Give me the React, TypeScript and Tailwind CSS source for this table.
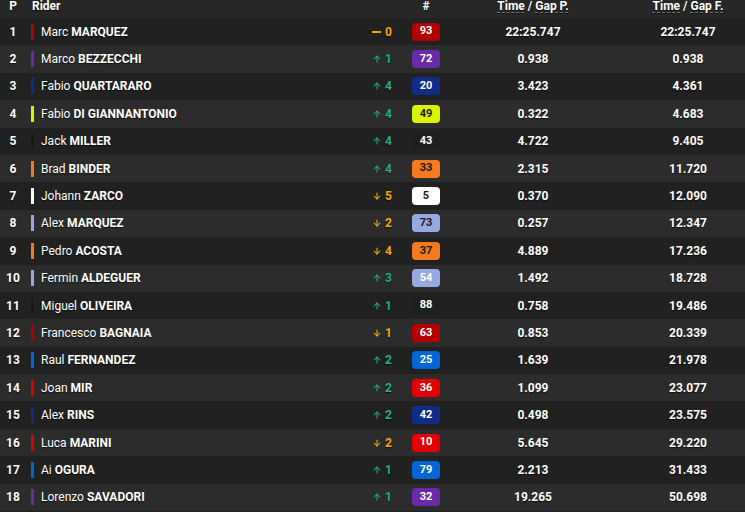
import { ArrowUp, ArrowDown } from 'lucide-react'

type Row = {
  pos: number
  first: string
  last: string
  team: string
  change: number
  num: number
  badge: string
  badgeText: string
  gapP: string
  gapF: string
}

const rows: Row[] = [
  { pos: 1, first: 'Marc', last: 'MARQUEZ', team: 'bg-[#b30000]', change: 0, num: 93, badge: 'bg-[#b30000]', badgeText: 'text-white', gapP: '22:25.747', gapF: '22:25.747' },
  { pos: 2, first: 'Marco', last: 'BEZZECCHI', team: 'bg-[#6a2aa8]', change: 1, num: 72, badge: 'bg-[#6a2aa8]', badgeText: 'text-white', gapP: '0.938', gapF: '0.938' },
  { pos: 3, first: 'Fabio', last: 'QUARTARARO', team: 'bg-[#0e2c88]', change: 4, num: 20, badge: 'bg-[#0e2c88]', badgeText: 'text-white', gapP: '3.423', gapF: '4.361' },
  { pos: 4, first: 'Fabio', last: 'DI GIANNANTONIO', team: 'bg-[#d8f400]', change: 4, num: 49, badge: 'bg-[#d8f400]', badgeText: 'text-[#1b1b1b]', gapP: '0.322', gapF: '4.683' },
  { pos: 5, first: 'Jack', last: 'MILLER', team: 'bg-[#1a1a1a]', change: 4, num: 43, badge: 'bg-[#1e1e1e]', badgeText: 'text-white', gapP: '4.722', gapF: '9.405' },
  { pos: 6, first: 'Brad', last: 'BINDER', team: 'bg-[#f47a20]', change: 4, num: 33, badge: 'bg-[#f47a20]', badgeText: 'text-[#1b1b1b]', gapP: '2.315', gapF: '11.720' },
  { pos: 7, first: 'Johann', last: 'ZARCO', team: 'bg-white', change: -5, num: 5, badge: 'bg-white', badgeText: 'text-[#1b1b1b]', gapP: '0.370', gapF: '12.090' },
  { pos: 8, first: 'Alex', last: 'MARQUEZ', team: 'bg-[#97a9e2]', change: -2, num: 73, badge: 'bg-[#97a9e2]', badgeText: 'text-[#1b1b1b]', gapP: '0.257', gapF: '12.347' },
  { pos: 9, first: 'Pedro', last: 'ACOSTA', team: 'bg-[#f47a20]', change: -4, num: 37, badge: 'bg-[#f47a20]', badgeText: 'text-[#1b1b1b]', gapP: '4.889', gapF: '17.236' },
  { pos: 10, first: 'Fermin', last: 'ALDEGUER', team: 'bg-[#97a9e2]', change: 3, num: 54, badge: 'bg-[#97a9e2]', badgeText: 'text-white', gapP: '1.492', gapF: '18.728' },
  { pos: 11, first: 'Miguel', last: 'OLIVEIRA', team: 'bg-[#1a1a1a]', change: 1, num: 88, badge: 'bg-[#1e1e1e]', badgeText: 'text-white', gapP: '0.758', gapF: '19.486' },
  { pos: 12, first: 'Francesco', last: 'BAGNAIA', team: 'bg-[#b30000]', change: -1, num: 63, badge: 'bg-[#b30000]', badgeText: 'text-white', gapP: '0.853', gapF: '20.339' },
  { pos: 13, first: 'Raul', last: 'FERNANDEZ', team: 'bg-[#0066d6]', change: 2, num: 25, badge: 'bg-[#0066d6]', badgeText: 'text-white', gapP: '1.639', gapF: '21.978' },
  { pos: 14, first: 'Joan', last: 'MIR', team: 'bg-[#e30000]', change: 2, num: 36, badge: 'bg-[#e30000]', badgeText: 'text-white', gapP: '1.099', gapF: '23.077' },
  { pos: 15, first: 'Alex', last: 'RINS', team: 'bg-[#0e2c88]', change: 2, num: 42, badge: 'bg-[#0e2c88]', badgeText: 'text-white', gapP: '0.498', gapF: '23.575' },
  { pos: 16, first: 'Luca', last: 'MARINI', team: 'bg-[#e30000]', change: -2, num: 10, badge: 'bg-[#e30000]', badgeText: 'text-white', gapP: '5.645', gapF: '29.220' },
  { pos: 17, first: 'Ai', last: 'OGURA', team: 'bg-[#0066d6]', change: 1, num: 79, badge: 'bg-[#0066d6]', badgeText: 'text-white', gapP: '2.213', gapF: '31.433' },
  { pos: 18, first: 'Lorenzo', last: 'SAVADORI', team: 'bg-[#6a2aa8]', change: 1, num: 32, badge: 'bg-[#6a2aa8]', badgeText: 'text-white', gapP: '19.265', gapF: '50.698' },
]

function Change({ value }: { value: number }) {
  if (value === 0) {
    return (
      <span className="flex items-center gap-[4px] text-[#f5a90c]">
        <span className="block h-[2px] w-[9px] bg-[#f5a90c]" />
        <span className="font-bold">0</span>
      </span>
    )
  }
  const up = value > 0
  return (
    <span className={`flex items-center gap-[3px] ${up ? 'text-[#1fb37e]' : 'text-[#f5a90c]'}`}>
      {up ? <ArrowUp className="h-[10px] w-[10px]" strokeWidth={2.5} /> : <ArrowDown className="h-[10px] w-[10px]" strokeWidth={2.5} />}
      <span className="font-bold">{Math.abs(value)}</span>
    </span>
  )
}

function App() {
  return (
    <div className="h-[512px] w-[745px] overflow-hidden bg-[#212121] font-['Roboto',sans-serif] text-[12px] text-white [text-shadow:0_1px_1px_rgba(0,0,0,0.7)]">
      {/* Header */}
      <div className="flex h-[18px] items-start bg-[#272727] font-bold leading-[13px]">
        <div className="w-[26px] text-center">P</div>
        <div className="w-[334px] pl-[6px]">Rider</div>
        <div className="w-[32px]" />
        <div className="ml-[20px] w-[28px] text-center">#</div>
        <div className="w-[186px] text-center">
          <span className="underline decoration-dashed decoration-[#777] decoration-1 underline-offset-[2px]">Time</span>
          {' / '}
          <span className="underline decoration-dashed decoration-[#777] decoration-1 underline-offset-[2px]">Gap P.</span>
        </div>
        <div className="ml-[5px] flex-1 text-center">
          <span className="underline decoration-dashed decoration-[#777] decoration-1 underline-offset-[2px]">Time</span>
          {' / '}
          <span className="underline decoration-dashed decoration-[#777] decoration-1 underline-offset-[2px]">Gap F.</span>
        </div>
      </div>

      {/* Rows */}
      {rows.map((r, i) => (
        <div
          key={r.pos}
          className={`flex h-[27.4px] items-center ${i % 2 === 0 ? 'bg-[#212121]' : 'bg-[#2c2c2c]'}`}
        >
          <div className="w-[26px] text-center font-bold">{r.pos}</div>
          <div className="flex w-[334px] items-center pl-[5px]">
            <span className={`h-[16px] w-[3px] ${r.team}`} />
            <span className="ml-[7px]">
              {r.first} <span className="font-bold">{r.last}</span>
            </span>
          </div>
          <div className="flex w-[32px] justify-end">
            <Change value={r.change} />
          </div>
          <div className="ml-[20px] w-[28px]">
            <div
              className={`flex h-[18px] items-center justify-center rounded-[4px] text-[11px] font-bold [text-shadow:none] ${r.badge} ${r.badgeText}`}
            >
              {r.num}
            </div>
          </div>
          <div className="w-[186px] text-center font-bold">{r.gapP}</div>
          <div className="ml-[5px] flex-1 text-center font-bold">{r.gapF}</div>
        </div>
      ))}
    </div>
  )
}

export default App
